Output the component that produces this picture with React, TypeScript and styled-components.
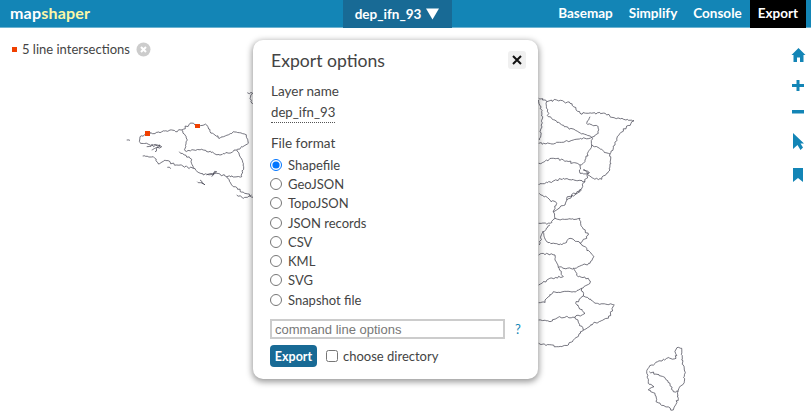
import React from "react";
import styled, { createGlobalStyle } from "styled-components";

const Global = createGlobalStyle`
  html, body { margin: 0; padding: 0; height: 100%; background: #fff; overflow: hidden; }
  body { font-family: Lato, "Noto Sans", sans-serif; color: #444; }
  #root { height: 100%; }
`;

const Page = styled.div`
  position: relative;
  width: 811px;
  height: 414px;
  overflow: hidden;
  background: #fff;
`;

const Header = styled.header`
  height: 27px;
  background: #1385b6;
  border-bottom: 1px solid #6db3d1;
  display: grid;
  grid-template-columns: 1fr auto 1fr;
  color: #fff;
  font-size: 13.5px;
  font-weight: 700;
`;
const Logo = styled.div`
  padding-left: 10px;
  font-size: 16px;
  font-weight: 700;
  line-height: 26px;
  letter-spacing: 0.2px;
  span { color: #fdf7a6; }
`;
const LayerTab = styled.div`
  position: relative;
  background: #186a95;
  height: 28px;
  width: 109px;
  margin-left: -17px;
  display: flex;
  align-items: center;
  justify-content: center;
  gap: 5px;
`;
const Nav = styled.nav`
  display: flex;
  justify-content: flex-end;
  padding-right: 5px;
`;
const NavItem = styled.div<{ $active?: boolean }>`
  padding: 0 8px;
  line-height: 27px;
  height: 28px;
  background: ${(p) => (p.$active ? "#000" : "transparent")};
`;

const MapLayer = styled.svg`
  position: absolute;
  left: 0;
  top: 0;
  width: 811px;
  height: 414px;
`;

const Notice = styled.div`
  position: absolute;
  left: 12px;
  top: 40px;
  display: flex;
  align-items: center;
  font-size: 13px;
  color: #444;
  line-height: 18px;
`;
const Dot = styled.i`
  width: 5px;
  height: 5px;
  background: #f04000;
  margin-right: 5px;
`;
const Dismiss = styled.svg`
  width: 15px;
  height: 15px;
  margin-left: 6px;
`;

const Buttons = styled.div`
  position: absolute;
  left: 790px;
  top: 45px;
  display: flex;
  flex-direction: column;
  gap: 7px;
  width: 16px;
`;
const Tool = styled.svg`
  display: block;
  width: 16px;
  height: 22px;
  fill: #1385b6;
`;

const Dialog = styled.section`
  position: absolute;
  left: 253px;
  top: 40px;
  width: 285px;
  height: 339px;
  box-sizing: border-box;
  padding: 9px 18px;
  background: #fff;
  border-radius: 10px;
  box-shadow: 0 2px 6px 1px rgba(0, 0, 0, 0.4);
  font-size: 13px;
  color: #444;
`;
const Title = styled.h3`
  margin: 0;
  font-size: 17.6px;
  font-weight: 400;
  line-height: 24px;
`;
const Close = styled.button`
  position: absolute;
  right: 12px;
  top: 11px;
  width: 18px;
  height: 18px;
  padding: 0;
  border: 0;
  border-radius: 3px;
  background: #f0f0f0;
  display: flex;
  align-items: center;
  justify-content: center;
`;
const Label = styled.div<{ $gap: number }>`
  margin-top: ${(p) => p.$gap}px;
  font-size: 13.5px;
  line-height: 20px;
`;
const LayerInput = styled.div`
  display: inline-block;
  margin-top: 2px;
  line-height: 19px;
  height: 19px;
  border-bottom: 1px dotted #555;
  font-size: 13.2px;
`;
const FormatList = styled.div`
  margin-top: 2px;
  margin-left: -1px;
  display: flex;
  flex-direction: column;
`;
const Format = styled.label`
  display: flex;
  align-items: center;
  height: 19.3px;
  font-size: 13px;
  input {
    width: 12px;
    height: 12px;
    margin: 0 6px 0 0;
  }
`;
const CommandRow = styled.div`
  margin-top: 10px;
  margin-left: -1px;
  display: flex;
  align-items: center;
`;
const CommandInput = styled.input`
  flex: none;
  box-sizing: border-box;
  width: 235px;
  height: 20px;
  padding: 0 3px;
  border: 2px solid #ccc;
  background: #fff;
  font-family: "Liberation Sans", Arial, sans-serif;
  font-size: 13px;
  &::placeholder { color: #777; opacity: 1; }
`;
const Help = styled.span`
  margin-left: 10px;
  color: #1385b6;
  font-size: 13px;
`;
const SubmitRow = styled.div`
  margin-top: 6px;
  margin-left: -1px;
  display: flex;
  align-items: center;
`;
const Submit = styled.button`
  width: 47px;
  height: 22px;
  padding: 0;
  border: 0;
  border-radius: 4px;
  background: #186a95;
  color: #fff;
  font-family: inherit;
  font-size: 12.5px;
  font-weight: 700;
`;
const Choice = styled.label`
  display: flex;
  align-items: center;
  margin-left: 9px;
  font-size: 13px;
  input { width: 12px; height: 12px; margin: 0 5px 0 0; }
`;

type P = [number, number];
function rough(pts: P[], seed: number): string {
  let s = seed * 9301 + 49297;
  const rnd = () => {
    s = (s * 9301 + 49297) % 233280;
    return s / 233280 - 0.5;
  };
  let d = `M${pts[0][0].toFixed(1)} ${pts[0][1].toFixed(1)}`;
  for (let i = 1; i < pts.length; i++) {
    const [a, b] = pts[i - 1];
    const [c, e] = pts[i];
    const len = Math.hypot(c - a, e - b);
    const n = Math.max(1, Math.round(len / 1.8));
    for (let k = 1; k <= n; k++) {
      const t = k / n;
      const j = k === n ? 0 : 2;
      d += `L${(a + (c - a) * t + rnd() * j).toFixed(1)} ${(b + (e - b) * t + rnd() * j).toFixed(1)}`;
    }
  }
  return d;
}
const at = (ox: number, oy: number, list: number[][]): P[] =>
  list.map(([x, y]) => [ox + x / 3, oy + y / 3] as P);

const lines: P[][] = [
  // Brittany
  at(110, 80, [[90, 188], [90, 170], [113, 160], [150, 158], [180, 150], [197, 155], [215, 150], [240, 130], [262, 135], [290, 135], [300, 155], [330, 175], [370, 155], [410, 165], [415, 190], [380, 210], [400, 250], [395, 290], [350, 290], [370, 320], [430, 352]]),
  at(110, 80, [[90, 188], [130, 195], [155, 200], [125, 210]]),
  at(110, 80, [[110, 200], [150, 195], [135, 215]]),
  at(110, 80, [[98, 228], [130, 230], [145, 252], [165, 240], [200, 255], [250, 265], [280, 285], [320, 280], [350, 290]]),
  at(110, 80, [[215, 150], [232, 180], [225, 212], [280, 210], [330, 225], [380, 210]]),
  at(110, 80, [[208, 215], [245, 238], [250, 265]]),
  at(110, 80, [[262, 305], [285, 315], [270, 300]]),
  at(110, 80, [[290, 285], [320, 275], [305, 290]]),
  at(110, 80, [[50, 180], [60, 182]]),
  at(110, 80, [[172, 262], [182, 266]]),
  at(110, 80, [[412, 38], [428, 40], [420, 55], [428, 72]]),
  at(110, 80, [[380, 345], [400, 355], [425, 345]]),
  // North-east
  at(530, 0, [[26, 295], [50, 305], [80, 300], [120, 310], [150, 340], [175, 340], [225, 340], [245, 352], [312, 362], [270, 400], [255, 430], [240, 462], [240, 510], [215, 538], [190, 535], [160, 510], [178, 518]]),
  at(530, 0, [[50, 305], [55, 350], [95, 375], [185, 412], [205, 400], [205, 380], [170, 370], [180, 350]]),
  at(530, 0, [[26, 430], [70, 432], [130, 420], [185, 412], [185, 435], [240, 462]]),
  at(530, 0, [[185, 435], [160, 490], [150, 495], [100, 480], [70, 475], [26, 490]]),
  at(530, 0, [[150, 495], [150, 520], [178, 518], [165, 545], [100, 535], [26, 555]]),
  at(530, 0, [[110, 600], [150, 575], [165, 545]]),
  at(530, 0, [[26, 300], [38, 350], [28, 420]]),
  // South-east
  at(530, 190, [[155, 0], [110, 25], [105, 45], [70, 65], [80, 40], [60, 30], [28, 10]]),
  at(530, 190, [[70, 65], [75, 85], [60, 100], [26, 100]]),
  at(530, 190, [[75, 85], [90, 90], [150, 85], [155, 110], [175, 135], [150, 160], [120, 145], [95, 165], [50, 155], [38, 125], [60, 105]]),
  at(530, 190, [[150, 160], [170, 175], [192, 200], [180, 220], [130, 235], [85, 232], [75, 210], [75, 195], [50, 190], [26, 195]]),
  at(530, 190, [[85, 232], [100, 260], [60, 265], [26, 285]]),
  at(530, 190, [[130, 235], [145, 260], [175, 265], [180, 280], [155, 295], [130, 305], [70, 305], [45, 330], [45, 338], [26, 338]]),
  at(530, 190, [[155, 295], [160, 318], [137, 340], [165, 370], [135, 382], [85, 382], [60, 395], [26, 390]]),
  at(530, 190, [[160, 318], [200, 340], [253, 345], [235, 385], [190, 400], [160, 420], [135, 382]]),
  at(530, 190, [[160, 420], [135, 445], [115, 465], [80, 470], [26, 460]]),
  at(530, 190, [[38, 125], [28, 165]]),
  // Corsica
  at(530, 190, [[445, 472], [437, 480], [438, 505], [410, 505], [365, 525], [350, 545], [355, 580], [372, 590], [355, 600], [375, 610], [378, 635], [430, 660], [445, 625], [445, 600], [463, 575], [463, 540], [455, 510], [455, 475], [445, 472]]),
  at(530, 190, [[358, 545], [400, 560], [420, 580], [430, 605], [445, 605]]),
];

const formats = ["Shapefile", "GeoJSON", "TopoJSON", "JSON records", "CSV", "KML", "SVG", "Snapshot file"];

export default function App() {
  return (
    <Page>
      <Global />
      <MapLayer viewBox="0 0 811 414">
        {lines.map((pts, i) => (
          <path key={i} d={rough(pts, i + 3)} fill="none" stroke="#3c3c4a" strokeWidth="0.7" />
        ))}
        <rect x="145" y="131" width="5" height="5" fill="#f04000" />
        <rect x="195" y="124" width="5" height="4" fill="#f04000" />
      </MapLayer>
      <Header>
        <Logo>map<span>shaper</span></Logo>
        <LayerTab>
          dep_ifn_93
          <svg width="13" height="12" viewBox="0 0 13 12"><path d="M0 .5h13L6.500 11.500z" fill="#fff" /></svg>
        </LayerTab>
        <Nav>
          <NavItem>Basemap</NavItem>
          <NavItem>Simplify</NavItem>
          <NavItem>Console</NavItem>
          <NavItem $active>Export</NavItem>
        </Nav>
      </Header>
      <Notice>
        <Dot />
        5 line intersections
        <Dismiss viewBox="0 0 15 15">
          <circle cx="7.500" cy="7.500" r="7" fill="#ccc" />
          <path d="M5 5l5 5M10 5l-5 5" stroke="#fff" strokeWidth="2" />
        </Dismiss>
      </Notice>
      <Buttons>
        <Tool viewBox="0 0 16 22"><path d="M8.500 3L1.500 10h2v7h3.500v-4.500h3V17H13.500v-7h2z" /></Tool>
        <Tool viewBox="0 0 16 22"><path d="M6.500 6h3v4h4.500v3H9.500v4h-3v-4H2v-3h4.500z" /></Tool>
        <Tool viewBox="0 0 16 22"><path d="M2 7h12v3.500H2z" /></Tool>
        <Tool viewBox="0 0 16 22"><path d="M3 1l11 10.500h-3.500l2.500 4-2.500 2.500-3-5-4.500 4z" /></Tool>
        <Tool viewBox="0 0 16 22"><path d="M3 7h10v14l-5-4-5 4z" /></Tool>
      </Buttons>
      <Dialog>
        <Title>Export options</Title>
        <Close aria-label="close">
          <svg width="10" height="10" viewBox="0 0 10 10"><path d="M1 1l8 8M9 1l-8 8" stroke="#111" strokeWidth="2" /></svg>
        </Close>
        <Label $gap={8}>Layer name</Label>
        <LayerInput>dep_ifn_93</LayerInput>
        <Label $gap={10}>File format</Label>
        <FormatList>
          {formats.map((f, i) => (
            <Format key={f}>
              <input type="radio" name="fmt" defaultChecked={i === 0} />
              {f}
            </Format>
          ))}
        </FormatList>
        <CommandRow>
          <CommandInput placeholder="command line options" />
          <Help>?</Help>
        </CommandRow>
        <SubmitRow>
          <Submit>Export</Submit>
          <Choice><input type="checkbox" />choose directory</Choice>
        </SubmitRow>
      </Dialog>
    </Page>
  );
}
